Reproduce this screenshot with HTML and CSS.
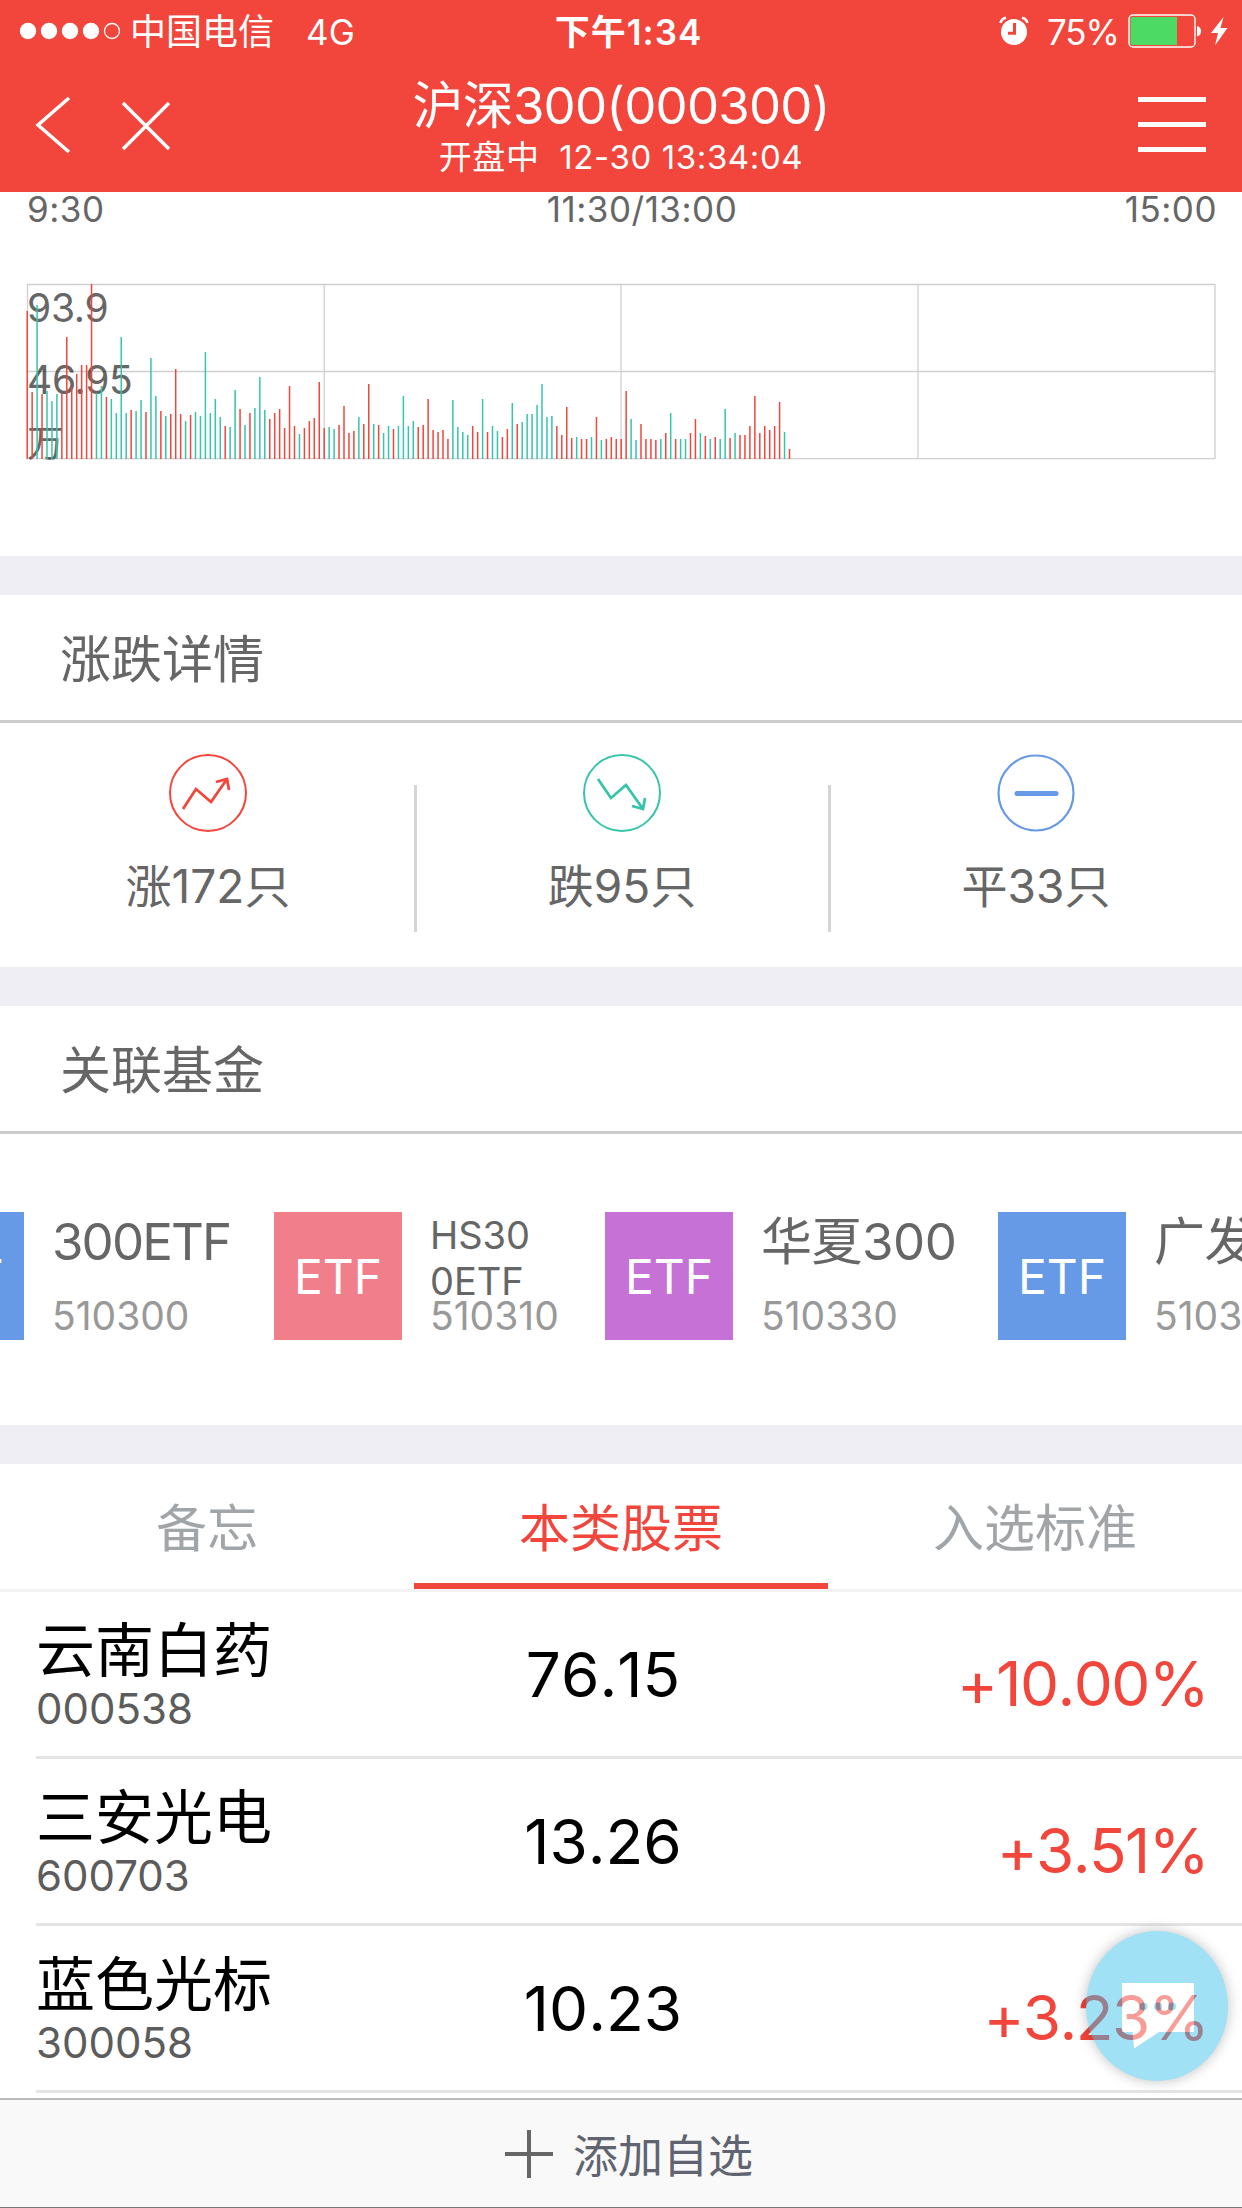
FILE: index.html
```html
<!doctype html>
<html lang="zh-CN">
  <head>
    <meta charset="utf-8">
    <title>沪深300(000300)</title>
    <link rel="stylesheet" href="styles.css">
  </head>
  <body>
    <div class="page">
      <header class="header">
        <div class="status-bar">
          <div class="status-left">
            <svg class="signal" width="102" height="18" viewBox="0 0 102 18" fill="#fff">
              <circle cx="9" cy="9" r="8.2" />
              <circle cx="30" cy="9" r="8.2" />
              <circle cx="51" cy="9" r="8.2" />
              <circle cx="72" cy="9" r="8.2" />
              <circle cx="93" cy="9" r="7.5" fill="none" stroke="#fff" stroke-width="1.3" />
            </svg>
            <span class="carrier">中国电信</span>
            <span class="network">4G</span>
          </div>
          <div class="status-time">下午1:34</div>
          <div class="status-right">
            <svg width="30" height="30" viewBox="0 0 30 30">
              <circle cx="15" cy="16" r="13" fill="#fff" />
              <path d="M1.500 7A7 7 0 0 1 7 1.700M28.500 7A7 7 0 0 0 23 1.700" stroke="#fff" stroke-width="2.600" fill="none" />
              <path d="M15.500 7v10.200H9" stroke="#f2453b" stroke-width="3" fill="none" />
            </svg>
            <span class="percent">75%</span>
            <svg class="battery" width="74" height="34" viewBox="0 0 74 34">
              <rect x="1" y="1" width="66" height="32" rx="4" fill="none" stroke="#fff" stroke-width="1.400" />
              <path d="M4.500 3H49v28H4.500Q2.500 31 2.500 29V5Q2.500 3 4.500 3z" fill="#4cd964" />
              <path d="M69 12q4 1 4 5.300t-4 5.200z" fill="#fff" />
            </svg>
            <svg class="bolt" width="17" height="32" viewBox="0 0 17 30">
              <path d="M12.500 1 0 17h7L4 29.500 16.500 12H9.500z" fill="#fff" />
            </svg>
          </div>
        </div>
        <div class="nav">
          <div class="nav-left">
            <svg class="back" width="36" height="60" viewBox="0 0 36 60" fill="none" stroke="#fff" stroke-width="3.500">
              <path d="M34 3 3 30l31 27" />
            </svg>
            <svg class="close" width="50" height="50" viewBox="0 0 50 50" fill="none" stroke="#fff" stroke-width="3.500">
              <path d="M2 2l46 46M48 2 2 48" />
            </svg>
          </div>
          <div class="nav-title">
            <h1>沪深300(000300)</h1>
            <p>开盘中&nbsp; 12-30 13:34:04</p>
          </div>
          <div class="menu"><i></i><i></i><i></i></div>
        </div>
      </header>

      <section class="chart">
        <div class="axis">
          <span>9:30</span>
          <span>11:30/13:00</span>
          <span>15:00</span>
        </div>
        <svg class="volume" width="1242" height="330" viewBox="0 226 1242 330">
          <g class="volume-label">
            <text x="27" y="322">93.9</text>
            <text x="27" y="394">46.95</text>
            <text x="27" y="457" class="unit">万</text>
          </g>
          <path class="grid" d="M27 284.500H1215M27 371.500H1215M27 458.700H1215M27.500 284V459M324.200 284V459M621 284V459M918 284V459M1215 284V459" />
          <g id="bars"></g>
        </svg>
      </section>

      <section class="block">
        <h2>涨跌详情</h2>
        <div class="stats">
          <div class="stat">
            <svg width="78" height="78" viewBox="0 0 78 78" fill="none" stroke="#f2453b">
              <circle cx="39" cy="39" r="38" stroke-width="2" />
              <path d="M14 55 27 35l15 13 16-23M47 28l11-3 2 11" stroke-width="2.800" />
            </svg>
            <span>涨172只</span>
          </div>
          <div class="divider"></div>
          <div class="stat">
            <svg width="78" height="78" viewBox="0 0 78 78" fill="none" stroke="#36c5aa">
              <circle cx="39" cy="39" r="38" stroke-width="2" />
              <path d="M15 25 28 44l15-13 17 24M49 52l11 3 2-11" stroke-width="2.800" />
            </svg>
            <span>跌95只</span>
          </div>
          <div class="divider"></div>
          <div class="stat">
            <svg width="78" height="78" viewBox="0 0 78 78" fill="none" stroke="#6699e6">
              <circle cx="39" cy="39" r="37.500" stroke-width="2.200" />
              <path d="M20 39.500h39" stroke-width="5" stroke-linecap="round" />
            </svg>
            <span>平33只</span>
          </div>
        </div>
      </section>

      <section class="block">
        <h2>关联基金</h2>
        <div class="funds">
          <div class="fund">
            <div class="fund-icon blue">ETF</div>
            <div class="fund-info"><b class="latin">300ETF</b><span>510300</span></div>
          </div>
          <div class="fund">
            <div class="fund-icon pink">ETF</div>
            <div class="fund-info"><b class="small">HS30<br>0ETF</b><span>510310</span></div>
          </div>
          <div class="fund">
            <div class="fund-icon purple">ETF</div>
            <div class="fund-info"><b>华夏300</b><span>510330</span></div>
          </div>
          <div class="fund">
            <div class="fund-icon blue">ETF</div>
            <div class="fund-info"><b>广发300</b><span>510360</span></div>
          </div>
        </div>
      </section>

      <section class="block">
        <div class="tabs">
          <div class="tab">备忘</div>
          <div class="tab active">本类股票</div>
          <div class="tab">入选标准</div>
        </div>
        <div class="stocks">
          <div class="stock">
            <div class="stock-name"><b>云南白药</b><span>000538</span></div>
            <div class="price">76.15</div>
            <div class="change">+10.00%</div>
          </div>
          <div class="stock">
            <div class="stock-name"><b>三安光电</b><span>600703</span></div>
            <div class="price">13.26</div>
            <div class="change">+3.51%</div>
          </div>
          <div class="stock">
            <div class="stock-name"><b>蓝色光标</b><span>300058</span></div>
            <div class="price">10.23</div>
            <div class="change">+3.23%</div>
          </div>
        </div>
      </section>

      <footer class="footer">
        <svg width="48" height="48" viewBox="0 0 48 48" stroke="#666" stroke-width="4">
          <path d="M0 24h48M24 0v48" />
        </svg>
        <span>添加自选</span>
      </footer>

      <div class="chat">
        <svg width="72" height="66" viewBox="0 0 72 66">
          <path d="M0 0h72v49H37L12 65.500 10.500 49H0z" fill="#fff" />
          <g fill="#39c1ec">
            <circle cx="21.500" cy="23.500" r="4" />
            <circle cx="36" cy="23.500" r="4" />
            <circle cx="50" cy="23.500" r="4" />
          </g>
        </svg>
      </div>
    </div>
    <script src="chart.js"></script>
  </body>
</html>
```

FILE: styles.css
```css
* {
  box-sizing: border-box;
  margin: 0;
  padding: 0;
}

body {
  background: #efeef4;
  color: #666;
  font-family: Inter, "Noto Sans CJK SC", sans-serif;
  font-weight: 400;
}

svg {
  display: block;
  flex: none;
}

b,
h1,
h2 {
  font-weight: 400;
}

.page {
  position: relative;
  width: 1242px;
  height: 2208px;
  overflow: hidden;
  display: flex;
  flex-direction: column;
}

/* header */
.header {
  height: 192px;
  background: #f2453b;
  color: #fff;
}

.status-bar {
  height: 60px;
  display: grid;
  grid-template-columns: 1fr auto 1fr;
  align-items: center;
  font-size: 35px;
  line-height: 60px;
  padding: 0 14px 0 19px;
}

.status-bar span,
.status-time {
  padding-top: 2px;
}

.status-left,
.status-right {
  display: flex;
  align-items: center;
}

.status-right {
  justify-content: flex-end;
}

.carrier {
  margin-left: 9px;
  font-size: 36px;
}

.network {
  margin-left: 32px;
  font-size: 35px;
}

.status-time {
  font-size: 35px;
  font-weight: 600;
  letter-spacing: 1px;
  margin-left: 10px;
}

.percent {
  margin-left: 18px;
  letter-spacing: -1px;
}

.battery {
  margin-left: 9px;
}

.bolt {
  margin-left: 9px;
}

.nav {
  height: 132px;
  display: grid;
  grid-template-columns: 1fr auto 1fr;
}

.nav-left {
  display: flex;
  align-items: flex-start;
}

.back {
  margin: 35px 0 0 35px;
}

.close {
  margin: 41px 0 0 50px;
}

.nav-title {
  padding-top: 18px;
  text-align: center;
  white-space: nowrap;
}

.nav-title h1 {
  font-size: 51px;
  line-height: 55px;
  letter-spacing: -0.8px;
}

.nav-title p {
  font-size: 33px;
  line-height: 48px;
  letter-spacing: 0.6px;
}

.menu {
  justify-self: end;
  width: 68px;
  margin: 37px 36px 0 0;
  display: flex;
  flex-direction: column;
  gap: 20px;
}

.menu i {
  height: 5px;
  background: #fff;
}

/* volume chart */
.chart {
  height: 364px;
  background: #fff;
}

.axis {
  display: grid;
  grid-template-columns: 1fr auto 1fr;
  height: 34px;
  padding: 1px 25px 0 27px;
  font-size: 35px;
  line-height: 33px;
  letter-spacing: 0.5px;
}

.axis span:nth-child(2) {
  margin-left: 40px;
}

.axis span:last-child {
  text-align: right;
}

.volume-label {
  font-size: 39px;
  fill: #666;
  letter-spacing: -0.3px;
}

.volume-label .unit {
  font-size: 37px;
}

.grid {
  fill: none;
  stroke: #000;
  stroke-opacity: 0.19;
  stroke-width: 1.3;
}

.up {
  stroke: #f2453b;
}

.down {
  stroke: #36c5aa;
}

/* white blocks */
.block {
  margin-top: 39px;
  background: #fff;
}

.block h2 {
  height: 128px;
  padding-left: 60px;
  border-bottom: 3px solid #ccc;
  font-size: 51px;
  line-height: 129px;
}

.stats {
  display: flex;
  height: 244px;
}

.stat {
  flex: 1;
  display: flex;
  flex-direction: column;
  align-items: center;
  padding: 31px 0 0 2px;
}

.stat span {
  margin-top: 24px;
  font-size: 46px;
  line-height: 60px;
}

.divider {
  width: 3px;
  height: 147px;
  margin: 62px -3px 0 0;
  background: #d5d5d5;
}

.funds {
  display: grid;
  grid-template-columns: 378px 331px 393px 393px;
  height: 291px;
  padding-top: 78px;
  margin-left: -104px;
  background: #fff;
}

.fund {
  display: flex;
}

.fund-icon {
  flex: none;
  width: 128px;
  height: 128px;
  color: #fff;
  font-size: 48px;
  line-height: 130px;
  text-align: center;
}

.blue {
  background: #6699e6;
}

.pink {
  background: #f07f8b;
}

.purple {
  background: #c571d5;
}

.fund-info {
  margin-left: 28px;
  white-space: nowrap;
}

.fund-info b {
  display: block;
  height: 80px;
  font-size: 51px;
  line-height: 60px;
  letter-spacing: -0.5px;
}

.fund-info .latin {
  letter-spacing: -1.9px;
}

.fund-info .small {
  font-size: 38px;
  line-height: 46px;
  letter-spacing: 0;
}

.fund-info span {
  display: block;
  padding-top: 1px;
  color: #999;
  font-size: 39px;
  line-height: 46px;
}

/* tabs */
.tabs {
  display: flex;
  height: 128px;
  border-bottom: 3px solid #f3f3f4;
}

.tab {
  flex: 1;
  color: #a2a5a8;
  font-size: 51px;
  line-height: 129px;
  text-align: center;
}

.tab.active {
  color: #f2453b;
  border-bottom: 6px solid #f2453b;
}

.stock {
  height: 167px;
  margin-left: 36px;
  padding-right: 34px;
  border-bottom: 3px solid #e4e4e4;
  display: grid;
  grid-template-columns: 372px 390px 1fr;
  color: #000;
}

.stock-name {
  padding-top: 23px;
}

.stock-name b {
  display: block;
  font-size: 59px;
  line-height: 72px;
}

.stock-name span {
  display: block;
  margin-top: -3px;
  color: #5c5c5c;
  font-size: 42px;
  line-height: 50px;
}

.price,
.change {
  font-size: 62px;
  line-height: 166px;
  text-align: center;
  font-kerning: none;
}

.change {
  padding-top: 9px;
  color: #f2453b;
  text-align: right;
  letter-spacing: -1.6px;
}

.footer {
  flex: 1;
  margin-top: 5px;
  display: flex;
  justify-content: center;
  align-items: center;
  gap: 20px;
  padding-left: 16px;
  background: #f9f9f9;
  border-top: 2px solid #bbb;
  border-bottom: 1px solid #777;
  box-shadow: 0 -5px 0 #fff;
  color: #5f6470;
  font-size: 45px;
  line-height: 60px;
}

.footer span {
  padding-top: 7px;
}

/* floating chat button, sits over the list */
.chat {
  position: absolute;
  left: 1086px;
  top: 1931px;
  width: 142px;
  height: 150px;
  padding: 52px 0 0 36px;
  border-radius: 50%;
  background: #39c1ec;
  opacity: 0.47;
  box-shadow: 0 0 12px 1px rgba(0, 0, 0, 0.45);
}
```

FILE: chart.js
```js
// minute volume, r = up, g = down, number = bar height in px
var volume =
  "r148 r67 g154 r65 g68 g58 g65 r65 r122 r72 r85 r94 r94 r175 g66 g73 r62 g60 g46 g122 " +
  "g46 r49 g48 g59 r47 g101 g63 r48 g43 r45 r90 r45 g38 r44 g47 g43 g107 g46 g60 g42 " +
  "r33 g32 g69 r50 g34 r46 g51 g82 g49 r40 r46 r50 r31 r73 r33 g25 r31 r38 r41 r77 " +
  "r31 g32 g30 r34 r53 r26 r28 g42 r35 r75 g35 r34 g26 g33 r30 g33 g63 g33 g38 r32 " +
  "r34 r60 r29 r27 r29 r20 g59 g32 g27 g24 r33 r27 g60 r27 g33 g28 r22 r30 g56 r35 " +
  "g37 g45 g45 g54 g75 g42 g43 r33 r24 r52 r21 g22 r20 r20 g22 r42 g19 r20 r22 r20 " +
  "r20 r68 g40 g19 r35 r20 r20 r19 g20 r26 g46 r20 g20 g20 r26 r40 g26 r23 g20 r22 " +
  "g20 g50 r21 g26 r24 r24 r33 r63 r26 r33 r29 r33 r57 g27 r10";

var bars = document.getElementById("bars");
var step = 1188 / 240;

volume.split(" ").forEach(function (item, i) {
  var line = document.createElementNS("http://www.w3.org/2000/svg", "line");
  var x = 27.2 + i * step;
  line.setAttribute("x1", x);
  line.setAttribute("x2", x);
  line.setAttribute("y1", 459 - Number(item.slice(1)));
  line.setAttribute("y2", 459);
  line.setAttribute("stroke-width", 1.5);
  line.setAttribute("class", item[0] === "r" ? "up" : "down");
  bars.appendChild(line);
});
```
